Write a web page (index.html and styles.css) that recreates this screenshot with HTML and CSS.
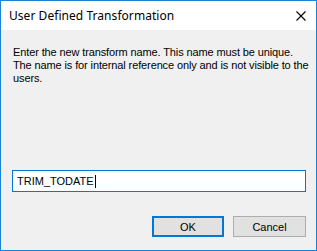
FILE: index.html
```html
<!DOCTYPE html>
<html>
<head>
<meta charset="utf-8">
<link rel="stylesheet" href="styles.css">
</head>
<body>
<div class="window">
  <div class="titlebar">
    <span class="title">User Defined Transformation</span>
    <span class="close">
      <svg width="10" height="10" viewBox="0 0 10 10"><path d="M0.5 0.5 L9.5 9.5 M9.5 0.5 L0.5 9.5" stroke="#000" stroke-width="1.1" fill="none"/></svg>
    </span>
  </div>
  <div class="content">
    <p class="message">Enter the new transform name. This name must be unique. The name is for internal reference only and is not visible to the users.</p>
    <div class="field">TRIM_TODATE<span class="caret"></span></div>
    <div class="buttons">
      <div class="btn btn-default">OK</div>
      <div class="btn">Cancel</div>
    </div>
  </div>
</div>
</body>
</html>
```
FILE: styles.css
```css
html, body {
  margin: 0;
  padding: 0;
  background: #ffffff;
}
.window {
  width: 317px;
  height: 251px;
  box-sizing: border-box;
  border: 1px solid #1883d7;
  display: flex;
  flex-direction: column;
  background: #f0f0f0;
}
.titlebar {
  height: 29px;
  background: #ffffff;
  display: flex;
  align-items: center;
  justify-content: space-between;
  padding-left: 8px;
  padding-right: 10px;
  flex: none;
}
.title {
  font-family: "Noto Sans", "Open Sans", sans-serif;
  font-size: 12px;
  letter-spacing: 0.05px;
  color: #000;
  margin-top: -1px;
}
.close {
  display: flex;
  width: 10px;
  height: 10px;
}
.content {
  flex: 1;
  padding: 0 10px 0 11px;
  display: flex;
  flex-direction: column;
  font-family: "Liberation Sans", Arial, sans-serif;
  font-size: 11px;
  color: #000;
}
.message {
  margin: 16px -6px 0 1px;
  line-height: 13px;
  height: 39px;
  letter-spacing: -0.12px;
}
.field {
  margin-top: 85px;
  height: 22px;
  box-sizing: border-box;
  border: 1px solid #0078d7;
  background: #fff;
  padding-left: 4px;
  line-height: 20px;
  display: flex;
  align-items: center;
}
.caret {
  display: inline-block;
  width: 1px;
  height: 13px;
  background: #000;
  margin-left: 1px;
}
.buttons {
  margin-top: 24px;
  display: flex;
  justify-content: flex-end;
  gap: 9px;
}
.btn {
  width: 73px;
  height: 21px;
  box-sizing: border-box;
  border: 1px solid #adadad;
  background: #e1e1e1;
  display: flex;
  align-items: center;
  justify-content: center;
}
.btn-default {
  border: 2px solid #0078d7;
  width: 72px;
}
```
